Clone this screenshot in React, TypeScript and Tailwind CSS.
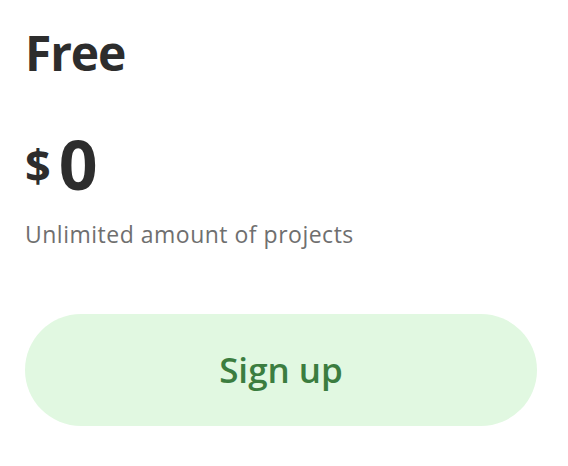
export default function App() {
  return (
    <div className="min-h-screen bg-white font-['Open_Sans',sans-serif]">
      <div className="px-[25px] pt-[29px]">
        <h2 className="text-[48px] font-bold leading-none tracking-[-1.2px] text-[#2d2d2d]">Free</h2>
        <div className="mt-[53px] flex items-center gap-[8px] text-[#2d2d2d]">
          <span className="text-[45px] font-bold leading-none">$</span>
          <span className="text-[68px] font-bold leading-none">0</span>
        </div>
        <p className="mt-[25px] text-[23px] leading-none tracking-[0.5px] text-[#6f6f6f]">Unlimited amount of projects</p>
        <button className="mt-[68px] flex h-[112px] w-[512px] items-center justify-center rounded-full bg-[#e1f8e1] text-[35px] font-semibold text-[#3b7d3f]">
          Sign up
        </button>
      </div>
    </div>
  );
}
